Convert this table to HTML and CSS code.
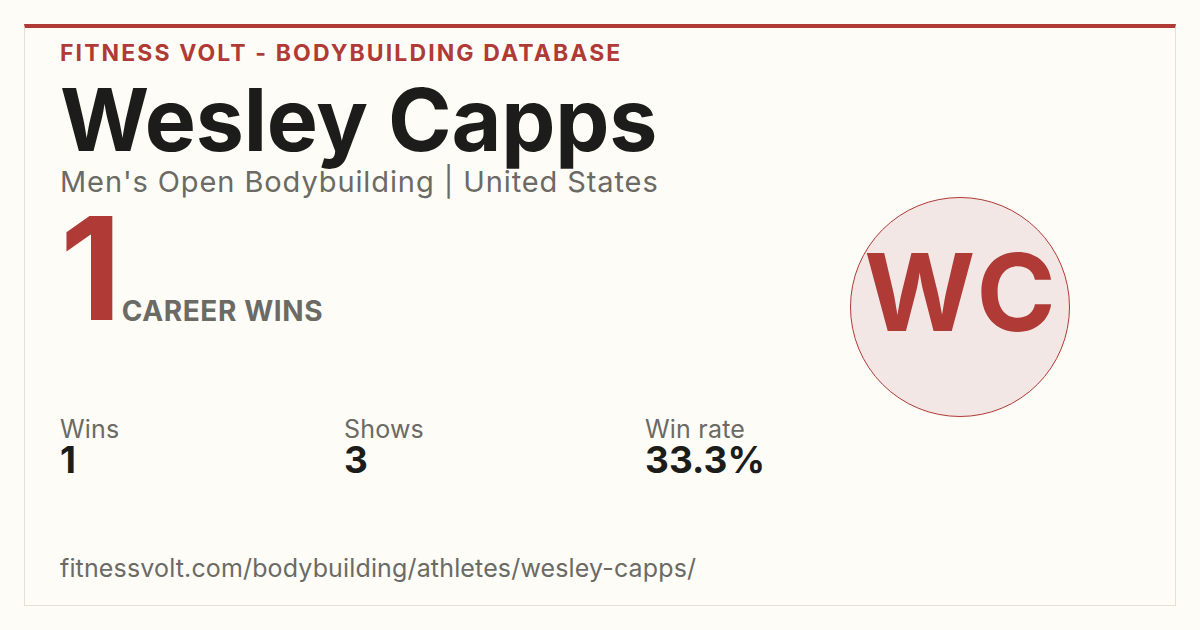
FILE: index.html
```html
<!DOCTYPE html>
<html lang="en">
<head>
<meta charset="utf-8">
<title>Wesley Capps - Fitness Volt</title>
<link rel="stylesheet" href="styles.css">
</head>
<body>
<div class="card">
  <div class="main">
    <div class="eyebrow">FITNESS VOLT - BODYBUILDING DATABASE</div>
    <h1 class="name">Wesley Capps</h1>
    <div class="sub">Men's Open Bodybuilding | United States</div>
    <div class="hero">
      <span class="hero-num">1</span>
      <span class="hero-label">CAREER WINS</span>
    </div>
    <div class="stats">
      <div class="stat">
        <div class="stat-label">Wins</div>
        <div class="stat-value">1</div>
      </div>
      <div class="stat">
        <div class="stat-label">Shows</div>
        <div class="stat-value">3</div>
      </div>
      <div class="stat">
        <div class="stat-label">Win rate</div>
        <div class="stat-value">33.3%</div>
      </div>
    </div>
    <div class="url">fitnessvolt.com/bodybuilding/athletes/wesley-capps/</div>
  </div>
  <div class="side">
    <div class="avatar"><span>WC</span></div>
  </div>
</div>
</body>
</html>
```
FILE: styles.css
```css
html, body {
  margin: 0;
  padding: 0;
}
body {
  background: #fdfcf7;
  font-family: Inter, "DejaVu Sans", sans-serif;
  width: 1200px;
  height: 630px;
  overflow: hidden;
}
.card {
  margin: 24px;
  box-sizing: border-box;
  width: 1152px;
  height: 582px;
  border: 1px solid #e3e0d8;
  border-top: 4px solid #b03a35;
  padding: 11px 35px 0 35px;
  display: flex;
}
.main {
  flex: 1;
  display: flex;
  flex-direction: column;
}
.eyebrow {
  font-size: 23px;
  line-height: 28px;
  font-weight: 700;
  letter-spacing: 2.1px;
  color: #b03a35;
}
.name {
  margin: 8px 0 0 0;
  font-size: 86px;
  line-height: 90px;
  font-weight: 700;
  letter-spacing: -0.2px;
  color: #1c1c1a;
}
.sub {
  margin-top: 1px;
  font-size: 29px;
  line-height: 32px;
  letter-spacing: 0.9px;
  color: #6b6a65;
}
.hero {
  margin-top: -2px;
  display: flex;
  align-items: flex-end;
  gap: 4px;
}
.hero-num {
  font-size: 143px;
  line-height: 143px;
  font-weight: 700;
  color: #b03a35;
  letter-spacing: -4px;
}
.hero-label {
  font-size: 28px;
  line-height: 28px;
  padding-bottom: 14px;
  font-weight: 700;
  letter-spacing: 0.6px;
  color: #6b6a65;
}
.stats {
  margin-top: 78px;
  display: grid;
  grid-template-columns: 284px 301px auto;
}
.stat-label {
  font-size: 25px;
  line-height: 24px;
  letter-spacing: 0.2px;
  color: #6b6a65;
}
.stat-value {
  font-size: 37px;
  line-height: 36px;
  margin-top: 1px;
  font-weight: 700;
  color: #1c1c1a;
}
.url {
  margin-top: 76px;
  font-size: 25px;
  line-height: 28px;
  letter-spacing: 0.15px;
  color: #6b6a65;
}
.side {
  width: 290px;
  padding-top: 158px;
  box-sizing: border-box;
}
.avatar {
  width: 220px;
  height: 220px;
  box-sizing: border-box;
  border-radius: 50%;
  border: 1.5px solid #b03a35;
  background: #f3e7e6;
  display: flex;
  align-items: center;
  justify-content: center;
  padding-bottom: 30px;
  padding-left: 4px;
}
.avatar span {
  font-size: 107px;
  font-weight: 700;
  color: #b03a35;
  letter-spacing: 4px;
  line-height: 1;
}
```
